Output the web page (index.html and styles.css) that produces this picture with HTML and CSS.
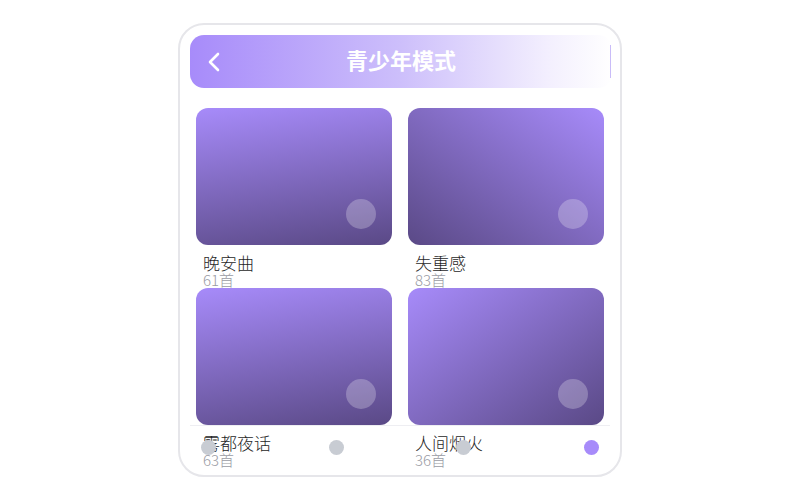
FILE: index.html
```html
<!DOCTYPE html>
<html lang="zh-CN">
<head>
    <meta charset="UTF-8">
    <meta name="viewport" content="width=device-width, initial-scale=1.0">
    <title>青少年模式</title>
    <link rel="stylesheet" href="styles.css">
</head>
<body>
    <div class="phone">
        <header class="top-bar">
            <button class="back" aria-label="返回">
                <svg width="14" height="20" viewBox="0 0 14 20">
                    <path d="M11 2 L3 10 L11 18" fill="none" stroke="#fff" stroke-width="2.6" stroke-linecap="round" stroke-linejoin="round"/>
                </svg>
            </button>
            <h1>青少年模式</h1>
        </header>

        <div class="list">
            <div class="item">
                <div class="cover cover-1"><span class="play"></span></div>
                <p class="name">晚安曲</p>
                <p class="count">61首</p>
            </div>
            <div class="item">
                <div class="cover cover-2"><span class="play"></span></div>
                <p class="name">失重感</p>
                <p class="count">83首</p>
            </div>
            <div class="item">
                <div class="cover cover-3"><span class="play"></span></div>
                <p class="name">雾都夜话</p>
                <p class="count">63首</p>
            </div>
            <div class="item">
                <div class="cover cover-4"><span class="play"></span></div>
                <p class="name">人间烟火</p>
                <p class="count">36首</p>
            </div>
        </div>

        <nav class="tabs">
            <span class="dot"></span>
            <span class="dot"></span>
            <span class="dot"></span>
            <span class="dot active"></span>
        </nav>
    </div>
</body>
</html>
```

FILE: styles.css
```css
body {
    margin: 0;
    background: #fff;
    font-family: "Noto Sans", "Noto Sans CJK SC", sans-serif;
}
.phone {
    position: relative;
    box-sizing: border-box;
    width: 444px;
    height: 454px;
    margin: 23px auto 0;
    padding: 10px 8px 0 10px;
    border: 2px solid #e6e6ea;
    border-radius: 26px;
    overflow: hidden;
}
.top-bar {
    position: relative;
    display: flex;
    align-items: center;
    justify-content: center;
    box-sizing: border-box;
    height: 53px;
    padding-bottom: 6px;
    border-radius: 14px;
    background: linear-gradient(90deg, #a78bfa 0%, #cdbffb 50%, #f3effe 85%, #ffffff 100%);
}
.top-bar::after {
    content: "";
    position: absolute;
    right: 1px;
    top: 10px;
    width: 1px;
    height: 33px;
    background: #c9bcf8;
}
.back {
    position: absolute;
    left: 17px;
    top: 17px;
    padding: 0;
    border: none;
    background: none;
}
.top-bar h1 {
    margin: 0;
    color: #fff;
    font-size: 22px;
    font-weight: 700;
    font-family: "Noto Sans CJK SC", sans-serif;
}
.list {
    display: grid;
    grid-template-columns: 1fr 1fr;
    grid-auto-rows: 180px;
    column-gap: 16px;
    padding: 20px 8px 0 6px;
}
.item {
    min-height: 0;
}
.cover {
    position: relative;
    height: 137px;
    border-radius: 12px;
}
.cover-1 {
    background: linear-gradient(172deg, #a78bfa 0%, #5a4986 100%);
}
.cover-2 {
    background: linear-gradient(to bottom left, #a78bfa 0%, #5a4986 100%);
}
.cover-3 {
    background: linear-gradient(170deg, #a78bfa 0%, #5a4986 100%);
}
.cover-4 {
    background: linear-gradient(to bottom right, #a78bfa 0%, #5a4986 100%);
}
.play {
    position: absolute;
    right: 16px;
    bottom: 16px;
    width: 30px;
    height: 30px;
    border-radius: 50%;
    background: rgba(255, 255, 255, 0.25);
}
.name {
    margin: 8px 0 0 7px;
    color: #1f1f1f;
    font-size: 17px;
    font-weight: 300;
    line-height: 20px;
    font-family: "Noto Sans CJK SC", sans-serif;
}
.count {
    margin: 0 0 0 7px;
    color: #9a9ca4;
    font-size: 15px;
    font-weight: 300;
    line-height: 14px;
    font-family: "Noto Sans CJK SC", sans-serif;
}
.tabs {
    position: absolute;
    left: 10px;
    right: 10px;
    bottom: 0;
    display: flex;
    justify-content: space-between;
    align-items: flex-start;
    box-sizing: border-box;
    height: 50px;
    padding: 14px 11px 0;
    border-top: 1px solid #eeeef2;
}
.dot {
    width: 15px;
    height: 15px;
    border-radius: 50%;
    background: #c8ccd3;
}
.dot.active {
    background: #a78bfa;
}
```
